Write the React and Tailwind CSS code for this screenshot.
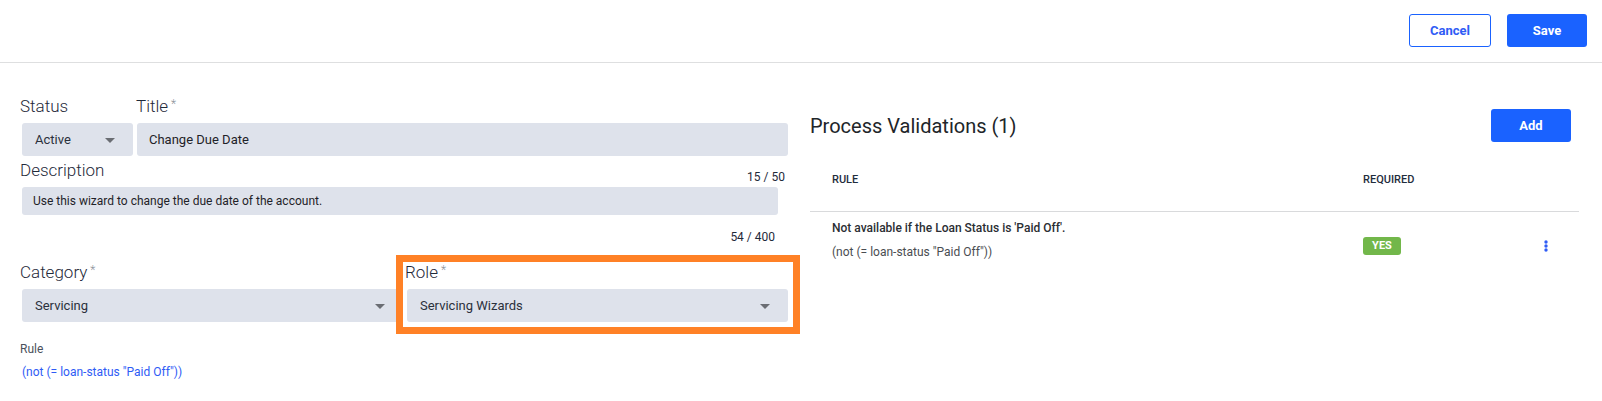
import clsx from 'clsx'

const validations = [
  {
    id: 1,
    title: "Not available if the Loan Status is 'Paid Off'.",
    rule: '(not (= loan-status "Paid Off"))',
    required: true,
  },
]

function Button({ children, outline = false }) {
  return (
    <button
      type="button"
      className={clsx(
        'h-[33px] rounded-[3px] text-[13px] font-bold',
        outline ? 'w-[82px] border border-[#1a62ff] bg-white text-[#2f5cf5]' : 'w-20 bg-[#1a62ff] text-white'
      )}
    >
      {children}
    </button>
  )
}

function Label({ htmlFor, required = false, children }) {
  return (
    <label htmlFor={htmlFor} className="block text-[17px] leading-[25px] font-light text-[#1f2a3a]">
      {children}
      {required && <span className="ml-[3px] align-top text-xs leading-5 text-[#8a8f98]">*</span>}
    </label>
  )
}

function SelectField({ id, label, value, required }) {
  return (
    <div>
      <Label htmlFor={id} required={required}>
        {label}
      </Label>
      <div className="relative mt-1 ml-0.5">
        <select
          id={id}
          defaultValue={value}
          className="block h-[33px] w-full appearance-none rounded-[3px] bg-[#dee2eb] pr-8 pl-[13px] text-[13px] text-[#2b313c]"
        >
          <option>{value}</option>
        </select>
        <svg
          viewBox="0 0 10 5"
          className="pointer-events-none absolute top-[15px] right-[18px] h-[5px] w-2.5 fill-[#6a6d73]"
          aria-hidden="true"
        >
          <path d="M0 0h10L5 5z" />
        </svg>
      </div>
    </div>
  )
}

function ProcessForm() {
  return (
    <form className="pt-[31px] pr-[13px] pl-5">
      <div className="flex gap-[3px]">
        <div className="w-[113px] shrink-0">
          <SelectField id="status" label="Status" value="Active" />
        </div>
        <div className="grow">
          <Label htmlFor="title" required>
            Title
          </Label>
          <input
            id="title"
            type="text"
            defaultValue="Change Due Date"
            className="mt-1 ml-px block h-[33px] w-[calc(100%-1px)] rounded-[3px] bg-[#dee2eb] px-3 text-[13px] text-[#1f2228]"
          />
        </div>
      </div>

      <div className="mt-0.5 flex items-start justify-between pr-[3px]">
        <Label htmlFor="description">Description</Label>
        <span className="pt-[9px] text-xs leading-5 text-[#1f2a3a]">15 / 50</span>
      </div>
      <textarea
        id="description"
        rows={1}
        defaultValue="Use this wizard to change the due date of the account."
        className="ml-0.5 block h-7 w-[calc(100%-12px)] resize-none overflow-hidden rounded-[3px] bg-[#dee2eb] px-[11px] pt-1 text-xs leading-5 text-[#1f2228]"
      />
      <p className="mt-3 pr-[13px] text-right text-xs leading-5 text-[#1f2a3a]">54 / 400</p>

      <div className="mt-[13px] grid grid-cols-2 gap-0.5">
        <SelectField id="category" label="Category" value="Servicing" required />
        <div className="relative">
          <SelectField id="role" label="Role" value="Servicing Wizards" required />
          <div className="pointer-events-none absolute -top-[5px] -right-3 -bottom-3 -left-[9px] border-7 border-[#ff8126]" />
        </div>
      </div>

      <div className="mt-[17px]">
        <p className="text-xs leading-5 text-[#4a515c]">Rule</p>
        <a href="#rule" className="mt-[3px] ml-0.5 inline-block text-xs leading-5 text-[#2f5cf5]">
          (not (= loan-status "Paid Off"))
        </a>
      </div>
    </form>
  )
}

function ProcessValidations() {
  return (
    <section className="pt-[46px] pr-[23px] pl-[9px]">
      <div className="flex items-center justify-between pr-2">
        <h2 className="text-xl text-[#212529]">Process Validations ({validations.length})</h2>
        <Button>Add</Button>
      </div>

      <table className="mt-1.5 w-full text-left">
        <thead>
          <tr className="h-[63px] border-b border-[#d9dadc] text-[11px] text-[#1f2d3d]">
            <th className="pt-px pl-[22px] font-medium">RULE</th>
            <th className="w-[150px] pt-px font-medium">REQUIRED</th>
            <th className="w-[66px]" aria-label="Actions" />
          </tr>
        </thead>
        <tbody>
          {validations.map((item) => (
            <tr key={item.id} className="h-14">
              <td className="pt-0.5 pl-[22px] text-xs leading-6 text-[#4a4d52]">
                <p className="font-medium text-[#2b2e33]">{item.title}</p>
                <p>{item.rule}</p>
              </td>
              <td className="pt-3.5">
                <span className="block h-[18px] w-[38px] rounded-[3px] bg-[#72b74a] text-center text-[11px] leading-[17px] font-bold text-white">
                  {item.required ? 'YES' : 'NO'}
                </span>
              </td>
              <td className="pt-3.5">
                <button type="button" aria-label="More actions" className="mx-auto block">
                  <svg viewBox="0 0 4 12" className="h-3 w-1 fill-[#2f5cf5]">
                    <circle cx="2" cy="2" r="1.7" />
                    <circle cx="2" cy="6" r="1.7" />
                    <circle cx="2" cy="10" r="1.7" />
                  </svg>
                </button>
              </td>
            </tr>
          ))}
        </tbody>
      </table>
    </section>
  )
}

function App() {
  return (
    <div className="bg-white font-[Roboto,sans-serif]">
      <header className="flex justify-end gap-4 border-b border-[#dedfe0] pt-3.5 pr-[15px] pb-[15px]">
        <Button outline>Cancel</Button>
        <Button>Save</Button>
      </header>
      <main className="grid grid-cols-2">
        <ProcessForm />
        <ProcessValidations />
      </main>
    </div>
  )
}

export default App
